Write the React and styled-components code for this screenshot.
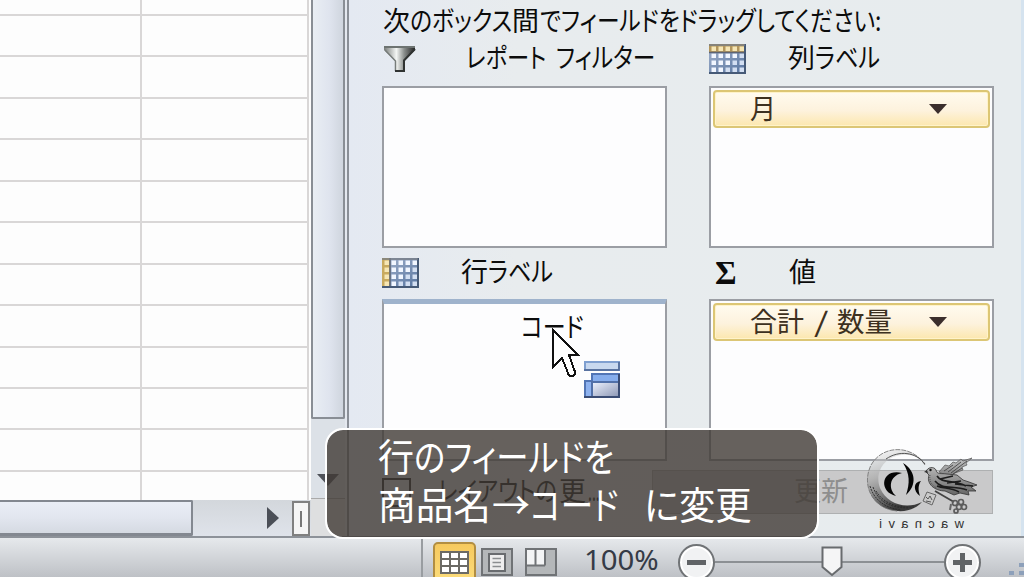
import React, { useLayoutEffect, useRef, useState } from 'react'
import styled, { createGlobalStyle, css } from 'styled-components'

const GlobalStyle = createGlobalStyle`
  * {
    box-sizing: border-box;
  }

  body {
    margin: 0;
    overflow: hidden;
    font-family: 'Liberation Sans', 'Noto Sans CJK JP', sans-serif;
  }
`

// Squeezes a run of text to the given width, like the narrow kana of a UI font
const Fit = ({ width, gap = 0, children }) => {
  const inner = useRef(null)
  const [scale, setScale] = useState(1)

  useLayoutEffect(() => {
    setScale(width / inner.current.offsetWidth)
  }, [width, children])

  return (
    <FitBox $width={width} $gap={gap}>
      <FitInner ref={inner} style={{ transform: `scaleX(${scale})` }}>
        {children}
      </FitInner>
    </FitBox>
  )
}

const FunnelIcon = () => (
  <svg width='34' height='28' viewBox='0 0 34 28'>
    <defs>
      <linearGradient id='funnel' x1='0' x2='1'>
        <stop offset='0' stopColor='#777b79' />
        <stop offset='.4' stopColor='#f4f6f4' />
        <stop offset='.65' stopColor='#8a8e8c' />
        <stop offset='1' stopColor='#222' />
      </linearGradient>
    </defs>
    <path d='M2 2H33V5L22 16V26H13V16L2 5Z' fill='url(#funnel)' />
    <path d='M2 2H33' stroke='#6d7371' strokeWidth='2' />
    <path d='M3 5L13.500 16V26' stroke='#777c7a' strokeWidth='1.500' fill='none' />
    <path d='M33 4L22 15.500V26H13' stroke='#303332' strokeWidth='2' fill='none' />
  </svg>
)

const TableIcon = ({ side }) => {
  const cells = []
  for (let r = 0; r < 4; r++) {
    for (let c = 0; c < 5; c++) {
      const head = side === 'top' ? r === 0 : c === 0
      cells.push(
        <rect
          key={`${r}-${c}`}
          x={2.5 + c * 7}
          y={2.5 + r * 7}
          width='4.500'
          height='4.500'
          fill={head ? '#f6e6b4' : c + r > 4 ? '#d3dff2' : '#f1f6ff'}
        />
      )
    }
  }
  return (
    <svg width='37' height='30' viewBox='0 0 37 30'>
      <defs>
        <linearGradient id='tableBlue' x1='0' y1='0' x2='1' y2='1'>
          <stop offset='0' stopColor='#a3b2cc' />
          <stop offset='1' stopColor='#55739f' />
        </linearGradient>
      </defs>
      <rect width='37' height='30' fill='url(#tableBlue)' />
      {side === 'top' ? (
        <rect width='37' height='8' fill='#b3965c' />
      ) : (
        <rect width='8' height='30' fill='#c8aa5f' />
      )}
      {cells}
      <path
        d={side === 'top' ? 'M0 8.500H37' : 'M8 0V30'}
        stroke='#5d6474'
        strokeWidth='1.500'
      />
      <path d='M0 29H36V0' stroke='#465a77' strokeWidth='2' fill='none' />
      <path d='M0 1H36' stroke='#777d84' strokeWidth='1.500' />
    </svg>
  )
}

const DropIcon = () => (
  <svg width='36' height='37' viewBox='0 0 36 37'>
    <defs>
      <linearGradient id='dropFill' x1='0' y1='0' x2='1' y2='1'>
        <stop offset='0' stopColor='#eef3ff' />
        <stop offset='1' stopColor='#8b96b4' />
      </linearGradient>
    </defs>
    <rect x='1' y='1' width='34' height='8' fill='#c8d8ef' stroke='#7f9fd0' strokeWidth='2' />
    <path d='M0 9H35V1' stroke='#4d6591' strokeWidth='1.500' fill='none' />
    <rect x='8' y='13' width='27' height='8' fill='#86adec' stroke='#5275b5' strokeWidth='2' />
    <rect x='1' y='20' width='7' height='16' fill='#8eb2ef' stroke='#5275b5' strokeWidth='2' />
    <rect x='8' y='21' width='27' height='15' fill='url(#dropFill)' stroke='#5170a8' strokeWidth='2' />
    <path d='M0 36H35V13' stroke='#3a4c74' strokeWidth='2' fill='none' />
  </svg>
)

const CursorIcon = () => (
  <svg width='30' height='52' viewBox='0 0 30 52' shapeRendering='crispEdges'>
    <path
      d='M2 3V40L11 31L17 46C18 51 24 50 24 45L18 28H27Z'
      fill='#fff'
      stroke='#111'
      strokeWidth='2'
    />
  </svg>
)

const NormalViewIcon = () => (
  <svg width='29' height='23' viewBox='0 0 29 23'>
    <rect width='29' height='23' fill='#6b6a65' />
    {[2, 9, 16].map(y =>
      [2, 11, 20].map(x => (
        <rect key={`${x}-${y}`} x={x} y={y} width='7' height='5' fill='#fff' />
      ))
    )}
  </svg>
)

const PageViewIcon = () => (
  <svg width='32' height='28' viewBox='0 0 32 28'>
    <rect x='1' y='1' width='30' height='26' fill='#b4b7b9' stroke='#707376' strokeWidth='2' />
    <rect x='8' y='6' width='16' height='17' fill='#eee' stroke='#696c6f' strokeWidth='2' />
    <path d='M11.500 10.500H20M11.500 14.500H20M11.500 18.500H20' stroke='#8b8e90' strokeWidth='1.500' />
  </svg>
)

const BreakViewIcon = () => (
  <svg width='32' height='28' viewBox='0 0 32 28'>
    <rect x='1' y='1' width='30' height='26' fill='#b4b7b9' stroke='#707376' strokeWidth='2' />
    <path d='M2 2H19V17H2Z' fill='#f3f4f5' />
    <path d='M10.500 2V17M20 1V17.500M1 17.500H20' stroke='#707376' strokeWidth='2' fill='none' />
  </svg>
)

const ZoomHandle = () => (
  <svg width='22' height='31' viewBox='0 0 22 31'>
    <path d='M1.500 1.500H20.500V21L11 29L1.500 21Z' fill='#f5f5f6' stroke='#686b6e' strokeWidth='2' />
  </svg>
)

const BirdLogo = () => (
  <svg width='116' height='68' viewBox='0 0 116 68'>
    <defs>
      <linearGradient id='moon' x1='0' y1='0' x2='.35' y2='1'>
        <stop offset='0' stopColor='#ddd' stopOpacity='.2' />
        <stop offset='.45' stopColor='#aaa' stopOpacity='.7' />
        <stop offset='1' stopColor='#3a3a3a' />
      </linearGradient>
      <linearGradient id='feather' x1='0' y1='0' x2='0' y2='1'>
        <stop offset='0' stopColor='#b5b5b5' />
        <stop offset='1' stopColor='#666' />
      </linearGradient>
    </defs>
    {/* crescent */}
    <path
      d='M60 17C48 -3 18 -4 6 17C-4 38 8 61 32 63C43 64 52 60 57 54C41 62 22 56 15 40C9 24 20 8 37 7C47 6 55 9 60 17Z'
      fill='url(#moon)'
    />
    <path d='M60 17C48 -3 18 -4 6 17C-4 38 8 61 32 63' stroke='#777' strokeWidth='.9' fill='none' strokeDasharray='5 1' />
    <path d='M21 11C34 2 51 4 60 16' stroke='#444' fill='none' strokeWidth='.9' />
    <path
      d='M5 38C9 52 20 60 36 62M8 39C13 53 24 60 44 60M11 43C18 55 31 60 49 59'
      stroke='#2a2a2a'
      strokeWidth='.9'
      fill='none'
      strokeDasharray='2 1'
    />
    {/* brush letters */}
    <path d='M37 25C16 20 13 44 31 48C23 41 24 28 37 25Z' fill='#050505' />
    <path d='M38 15C51 23 52 37 41 47C45 35 45 26 38 15Z' fill='#050505' />
    <path d='M56 33C48 34 48 43 55 48C53 42 53 37 56 33Z' fill='#050505' />
    {/* bird */}
    <path
      d='M74 24L80 17L84 18L88 14L91 15L96 11L98 13L107 10L101 15L102 17L97 19L98 22L90 25L84 29Z'
      fill='url(#feather)'
      fillOpacity='.75'
      stroke='#555'
      strokeWidth='.7'
    />
    <path
      d='M61 24C62 19 69 18 71 22C72 27 76 25 82 26L92 27L98 32L104 34L112 37L106 39L111 43L103 43L104 47L95 45L89 47L80 43C70 43 61 36 64 27Z'
      fill='url(#feather)'
      stroke='#333'
      strokeWidth='.8'
    />
    <path
      d='M72 28C77 36 88 31 101 38M70 33C77 42 88 37 102 42M75 31L88 28M82 35L96 33M72 38C79 41 85 39 94 44M90 36L108 38'
      stroke='#1d1d1d'
      strokeWidth='1.600'
      fill='none'
    />
    <path d='M79 23L88 17M83 24L96 14M86 25L102 13M88 26L97 20' stroke='#444' strokeWidth='.9' fill='none' />
    <path d='M65 27C64 33 67 38 72 40' stroke='#555' strokeDasharray='1 1' fill='none' />
    <circle cx='65.500' cy='22' r='1.200' fill='#111' />
    <path d='M62 22L59 24L63 25' fill='#333' />
    {/* key */}
    <path d='M62 44L71 47L67 57L58 53Z' fill='#c9c9c9' stroke='#666' />
    <path d='M61 49L63 51L65 48L67 52M61 53L66 54' stroke='#555' fill='none' />
    <path d='M70 43L89 54' stroke='#444' strokeWidth='1.800' />
    <path d='M86 56L85 62' stroke='#666' strokeWidth='2' />
    <g fill='none' stroke='#5c5c5c' strokeWidth='1.700'>
      <circle cx='90' cy='55' r='2.500' />
      <circle cx='96' cy='54' r='2.500' />
      <circle cx='99' cy='59' r='2.500' />
      <circle cx='94' cy='59' r='2.500' />
      <circle cx='91' cy='63' r='2' />
    </g>
  </svg>
)

const rows = [16, ...Array(11).fill(41.45), 30]

const Area = ({ icon, indent, label, drop, low, children }) => (
  <AreaColumn>
    <AreaLabel $low={low}>
      <AreaIcon $indent={indent}>{icon}</AreaIcon>
      {label}
    </AreaLabel>
    <AreaBox $drop={drop}>{children}</AreaBox>
  </AreaColumn>
)

const App = () => (
  <>
    <GlobalStyle />
    <Screen>
      <Workspace>
        <Sheet>
          <Cells>
            {rows.map((height, i) => (
              <CellRow key={i} $height={height}>
                <Cell $width={142} />
                <Cell $width={167} />
              </CellRow>
            ))}
          </Cells>
          <HorizontalScroll>
            <HorizontalThumb />
            <RightArrow />
            <SplitHandle />
          </HorizontalScroll>
        </Sheet>
        <VerticalScroll>
          <VerticalThumb />
          <DownArrow />
          <Corner />
        </VerticalScroll>
        <Splitter />
        <Panel>
          <Instruction>
            <Fit width={27}>次</Fit>
            <Fit width={102}>のボックス</Fit>
            <Fit width={27}>間</Fit>
            <Fit width={341} gap={1}>でフィールドをドラッグしてください:</Fit>
          </Instruction>
          <AreaRow>
            <Area
              icon={<FunnelIcon />}
              indent={84}
              label={
                <>
                  <Fit width={80}>レポート</Fit>
                  <Fit width={99} gap={10}>フィルター</Fit>
                </>
              }
            />
            <Area
              icon={<TableIcon side='top' />}
              indent={79}
              label={
                <>
                  <Fit width={27}>列</Fit>
                  <Fit width={65}>ラベル</Fit>
                </>
              }
            >
              <Field>
                <Fit width={26}>月</Fit>
              </Field>
            </Area>
          </AreaRow>
          <AreaRow>
            <Area
              low
              drop
              icon={<TableIcon side='left' />}
              indent={79}
              label={
                <>
                  <Fit width={27}>行</Fit>
                  <Fit width={65}>ラベル</Fit>
                </>
              }
            />
            <Area
              low
              icon={<Sigma>Σ</Sigma>}
              indent={80}
              label={<Fit width={27}>値</Fit>}
            >
              <Field>
                <Fit width={54}>合計</Fit>
                <Fit width={15} gap={10}>/</Fit>
                <Fit width={55} gap={8}>数量</Fit>
              </Field>
            </Area>
          </AreaRow>
          <Footer>
            <Checkbox />
            <DeferLabel>
              <Fit width={119}>レイアウトの</Fit>
              <Fit width={27} gap={2}>更</Fit>
              <Fit width={12} gap={2}>...</Fit>
            </DeferLabel>
            <UpdateButton>
              <Fit width={54}>更新</Fit>
            </UpdateButton>
          </Footer>
        </Panel>
      </Workspace>
      <StatusBar>
        <Views>
          <ViewButton $active>
            <NormalViewIcon />
          </ViewButton>
          <ViewButton>
            <PageViewIcon />
          </ViewButton>
          <ViewButton>
            <BreakViewIcon />
          </ViewButton>
        </Views>
        <Percent>
          <Fit width={75}>100%</Fit>
        </Percent>
        <RoundButton />
        <ZoomTrack>
          <ZoomHandle />
        </ZoomTrack>
        <RoundButton $plus />
        <Grip />
      </StatusBar>

      <DragText>
        <Fit width={63}>コード</Fit>
      </DragText>
      <Floating $x={551} $y={327}>
        <CursorIcon />
      </Floating>
      <Floating $x={584} $y={361}>
        <DropIcon />
      </Floating>
      <Watermark>
        <BirdLogo />
        <LogoName>wacnavi</LogoName>
      </Watermark>
      <Caption>
        <CaptionLine>
          <Fit width={36}>行</Fit>
          <Fit width={200}>のフィールドを</Fit>
        </CaptionLine>
        <CaptionLine>
          <Fit width={113}>商品名</Fit>
          <Fit width={38} gap={1}>→</Fit>
          <Fit width={89}>コード</Fit>
          <Fit width={108} gap={25}>に変更</Fit>
        </CaptionLine>
      </Caption>
    </Screen>
  </>
)

const FitBox = styled.span`
  display: block;
  flex: none;
  width: ${props => props.$width}px;
  margin-left: ${props => props.$gap}px;
  white-space: nowrap;
`

const FitInner = styled.span`
  display: inline-block;
  transform-origin: 0 50%;
  font-feature-settings: 'palt';
`

const Screen = styled.div`
  position: relative;
  width: 1024px;
  height: 577px;
  overflow: hidden;
  display: flex;
  flex-direction: column;
  background: #e7ebee;
  color: #0c0c0c;
`

const Workspace = styled.div`
  display: flex;
  height: 538px;
  border-bottom: 2px solid #8d9299;
`

const Sheet = styled.div`
  width: 311px;
  display: flex;
  flex-direction: column;
`

const Cells = styled.div`
  height: 500px;
  overflow: hidden;
  background: #fdfdfd;
`

const CellRow = styled.div`
  display: flex;
  height: ${props => props.$height}px;
`

const Cell = styled.div`
  width: ${props => props.$width}px;
  border-right: 2px solid #d9d7d7;
  border-bottom: 2px solid #d9d7d7;
`

const HorizontalScroll = styled.div`
  height: 36px;
  display: flex;
  align-items: center;
  background: linear-gradient(#d3d7dc, #dfe3ea);
`

const HorizontalThumb = styled.div`
  width: 193px;
  height: 36px;
  border: solid #838890;
  border-width: 2px 2px 3px 0;
  border-radius: 0 2px 2px 0;
  background: linear-gradient(#eaeef6, #e2e6ef 50%, #d5dae2);
`

const RightArrow = styled.div`
  margin-left: 74px;
  border: solid transparent;
  border-width: 11px 0 11px 12px;
  border-left-color: #4b4f57;
`

const SplitHandle = styled.div`
  width: 18px;
  height: 35px;
  margin-left: 13px;
  border: 2px solid #808080;
  background: linear-gradient(#777, #777) 6px 8px / 2px 16px no-repeat #f5f5f5;
`

const VerticalScroll = styled.div`
  width: 34px;
  display: flex;
  flex-direction: column;
  align-items: center;
  background: #dce1e7;
`

const VerticalThumb = styled.div`
  width: 34px;
  height: 419px;
  border: 2px solid #898e95;
  border-top: 0;
  border-radius: 0 0 2px 2px;
  background: linear-gradient(90deg, #e9eef4, #dfe4ee 55%, #cfd5de);
`

const DownArrow = styled.div`
  margin-top: 55px;
  border: solid transparent;
  border-width: 12px 11px 0;
  border-top-color: #50535a;
`

const Corner = styled.div`
  width: 34px;
  flex: 1;
  margin-top: 12px;
  border-top: 1px solid #aaa;
  background: #dedfe0;
`

const Splitter = styled.div`
  width: 4px;
  border-right: 2px solid #8a8f97;
  background: #e4e8ef;
`

const Panel = styled.div`
  flex: 1;
  padding-left: 33px;
  border-right: 3px solid #d5e3ef;
  background: linear-gradient(90deg, #e4e9f2, #e8ecee 25%, #e7ecee);
  font-family: 'Noto Sans CJK JP', sans-serif;
  font-size: 27px;
  line-height: 38px;
`

const Instruction = styled.div`
  display: flex;
  height: 38px;
  padding: 1px 0 0 1px;
`

const AreaRow = styled.div`
  display: grid;
  grid-template-columns: 285px 285px;
  gap: 42px;
`

const AreaColumn = styled.div`
  display: flex;
  flex-direction: column;
`

const AreaLabel = styled.div`
  display: flex;
  height: ${props => (props.$low ? 51 : 48)}px;
  padding-top: ${props => (props.$low ? 4 : 0)}px;
`

const AreaIcon = styled.div`
  width: ${props => props.$indent}px;
  height: 42px;
  display: flex;
  align-items: center;
`

const Sigma = styled.span`
  padding-left: 6px;
  font: bold 33px/38px 'Liberation Serif', serif;
`

const AreaBox = styled.div`
  height: 162px;
  padding: 2px;
  border: 2px solid #9b9ea4;
  background: #fdfdfe;

  ${props =>
    props.$drop &&
    css`
      border-top: 5px solid #9fb3cc;
    `}
`

const Field = styled.div`
  height: 38px;
  display: flex;
  align-items: center;
  padding: 0 0 2px 35px;
  position: relative;
  border: 2px solid #dcc675;
  border-radius: 4px;
  box-shadow: inset 0 0 0 1px #fff3c9;
  background: linear-gradient(#fffbef, #fdf2dd 55%, #fce7ae);
  color: #3d3020;

  &::after {
    content: '';
    position: absolute;
    left: 214px;
    top: 12px;
    border: solid transparent;
    border-width: 10px 9px 0;
    border-top-color: #3b2e2c;
  }
`

const Footer = styled.div`
  display: flex;
  align-items: center;
  height: 44px;
  margin-top: 9px;
`

const Checkbox = styled.div`
  width: 29px;
  height: 29px;
  margin-top: 1px;
  border: 2px solid #222;
`

const DeferLabel = styled.div`
  width: 214px;
  margin: -4px 0 0 27px;
  display: flex;
  color: #111;
`

const UpdateButton = styled.div`
  width: 341px;
  height: 44px;
  padding-left: 141px;
  border: 1px solid #aeb0b1;
  background: #c9c9ca;
  color: #8e8e8e;
`

const StatusBar = styled.div`
  height: 39px;
  display: flex;
  padding-left: 421px;
  background: linear-gradient(#e6e9ec, #d2d5d9 50%, #bec1c6);
`

const Views = styled.div`
  display: flex;
  align-items: flex-start;
  width: 164px;
  padding: 4px 0 0 10px;
  border-left: 2px solid #999da1;
`

const ViewButton = styled.div`
  height: 35px;
  padding-top: 6px;
  margin-right: 12px;

  ${props =>
    props.$active &&
    css`
      height: 40px;
      width: 43px;
      margin-right: 5px;
      padding: 7px 0 0 5px;
      border: 2px solid #b28e42;
      border-radius: 5px;
      background: linear-gradient(#f6c95e, #fcdc7b);
    `}

  svg {
    display: block;
  }
`

const Percent = styled.div`
  width: 94px;
  padding-top: 6px;
  color: #353b46;
  font: 27px/32px 'Noto Sans', sans-serif;
`

const RoundButton = styled.div`
  flex: none;
  width: 37px;
  height: 37px;
  margin-top: 6px;
  border: 2px solid #707376;
  border-radius: 50%;
  box-shadow: inset 0 0 0 2px #fff;
  background:
    linear-gradient(#606366, #606366) center / 19px 5px no-repeat,
    ${props => props.$plus && 'linear-gradient(#606366, #606366) center / 5px 19px no-repeat,'}
    #f1f2f3;
`

const ZoomTrack = styled.div`
  width: 230px;
  padding: 8px 0 0 106px;
  background: linear-gradient(#8c9094, #8c9094) 0 23px / 100% 2px no-repeat;
`

const Grip = styled.div`
  width: 16px;
  height: 16px;
  margin: 23px 0 0 27px;
  background:
    linear-gradient(#8da0ba, #8da0ba) 11px 2px / 5px 4px no-repeat,
    linear-gradient(#8da0ba, #8da0ba) 11px 10px / 5px 4px no-repeat,
    linear-gradient(#8da0ba, #8da0ba) 1px 10px / 5px 4px no-repeat;
`

const Floating = styled.div`
  position: absolute;
  left: ${props => props.$x}px;
  top: ${props => props.$y}px;
  line-height: 0;
`

const DragText = styled.div`
  position: absolute;
  left: 521px;
  top: 307px;
  font: 27px/38px 'Noto Sans CJK JP', sans-serif;
`

const Watermark = styled.div`
  position: absolute;
  left: 865px;
  top: 448px;
  width: 116px;
  line-height: 0;
`

const LogoName = styled.div`
  width: 92px;
  margin-left: 7px;
  transform: scaleX(-1);
  color: #333;
  font: 13px/16px 'Liberation Sans', sans-serif;
  letter-spacing: 6.3px;
`

const Caption = styled.div`
  position: absolute;
  left: 325px;
  top: 428px;
  width: 494px;
  height: 111px;
  padding: 1px 0 0 51px;
  border: 2px solid #fff;
  border-radius: 18px;
  background: rgba(64, 57, 52, 0.8);
  background-clip: padding-box;
  color: #fff;
  font: 38px/48px 'Noto Sans CJK JP', sans-serif;
`

const CaptionLine = styled.div`
  display: flex;
`

export default App
